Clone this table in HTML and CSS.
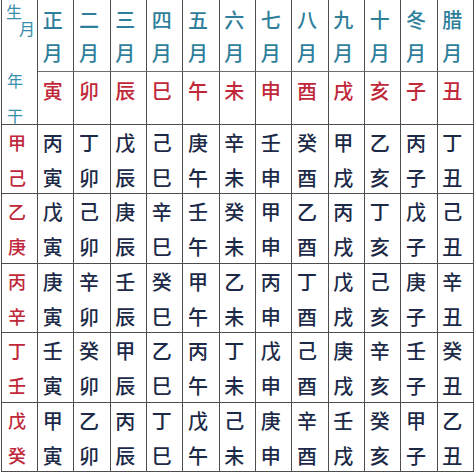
FILE: index.html
```html
<!DOCTYPE html>
<html lang="zh">
<head>
<meta charset="utf-8">
<link rel="stylesheet" href="styles.css">
</head>
<body>
<div class="chart">
  <div class="corner">
    <span class="c-sheng">生</span>
    <span class="c-yue">月</span>
    <span class="c-nian">年</span>
    <span class="c-gan">干</span>
  </div>
  <div class="cell month">正<br>月</div>
  <div class="cell month">二<br>月</div>
  <div class="cell month">三<br>月</div>
  <div class="cell month">四<br>月</div>
  <div class="cell month">五<br>月</div>
  <div class="cell month">六<br>月</div>
  <div class="cell month">七<br>月</div>
  <div class="cell month">八<br>月</div>
  <div class="cell month">九<br>月</div>
  <div class="cell month">十<br>月</div>
  <div class="cell month">冬<br>月</div>
  <div class="cell month">腊<br>月</div>

  <div class="cell branch">寅</div>
  <div class="cell branch">卯</div>
  <div class="cell branch">辰</div>
  <div class="cell branch">巳</div>
  <div class="cell branch">午</div>
  <div class="cell branch">未</div>
  <div class="cell branch">申</div>
  <div class="cell branch">酉</div>
  <div class="cell branch">戌</div>
  <div class="cell branch">亥</div>
  <div class="cell branch">子</div>
  <div class="cell branch">丑</div>

  <div class="cell year">甲<br>己</div>
  <div class="cell gz">丙<br>寅</div><div class="cell gz">丁<br>卯</div><div class="cell gz">戊<br>辰</div><div class="cell gz">己<br>巳</div><div class="cell gz">庚<br>午</div><div class="cell gz">辛<br>未</div><div class="cell gz">壬<br>申</div><div class="cell gz">癸<br>酉</div><div class="cell gz">甲<br>戌</div><div class="cell gz">乙<br>亥</div><div class="cell gz">丙<br>子</div><div class="cell gz">丁<br>丑</div>

  <div class="cell year">乙<br>庚</div>
  <div class="cell gz">戊<br>寅</div><div class="cell gz">己<br>卯</div><div class="cell gz">庚<br>辰</div><div class="cell gz">辛<br>巳</div><div class="cell gz">壬<br>午</div><div class="cell gz">癸<br>未</div><div class="cell gz">甲<br>申</div><div class="cell gz">乙<br>酉</div><div class="cell gz">丙<br>戌</div><div class="cell gz">丁<br>亥</div><div class="cell gz">戊<br>子</div><div class="cell gz">己<br>丑</div>

  <div class="cell year">丙<br>辛</div>
  <div class="cell gz">庚<br>寅</div><div class="cell gz">辛<br>卯</div><div class="cell gz">壬<br>辰</div><div class="cell gz">癸<br>巳</div><div class="cell gz">甲<br>午</div><div class="cell gz">乙<br>未</div><div class="cell gz">丙<br>申</div><div class="cell gz">丁<br>酉</div><div class="cell gz">戊<br>戌</div><div class="cell gz">己<br>亥</div><div class="cell gz">庚<br>子</div><div class="cell gz">辛<br>丑</div>

  <div class="cell year">丁<br>壬</div>
  <div class="cell gz">壬<br>寅</div><div class="cell gz">癸<br>卯</div><div class="cell gz">甲<br>辰</div><div class="cell gz">乙<br>巳</div><div class="cell gz">丙<br>午</div><div class="cell gz">丁<br>未</div><div class="cell gz">戊<br>申</div><div class="cell gz">己<br>酉</div><div class="cell gz">庚<br>戌</div><div class="cell gz">辛<br>亥</div><div class="cell gz">壬<br>子</div><div class="cell gz">癸<br>丑</div>

  <div class="cell year">戊<br>癸</div>
  <div class="cell gz">甲<br>寅</div><div class="cell gz">乙<br>卯</div><div class="cell gz">丙<br>辰</div><div class="cell gz">丁<br>巳</div><div class="cell gz">戊<br>午</div><div class="cell gz">己<br>未</div><div class="cell gz">庚<br>申</div><div class="cell gz">辛<br>酉</div><div class="cell gz">壬<br>戌</div><div class="cell gz">癸<br>亥</div><div class="cell gz">甲<br>子</div><div class="cell gz">乙<br>丑</div>
</div>
</body>
</html>
```

FILE: styles.css
```css
html, body {
  margin: 0;
  padding: 0;
  background: #ffffff;
}

body {
  font-family: "Noto Sans CJK SC", "Noto Sans CJK TC", sans-serif;
}

.chart {
  margin-left: 1px;
  width: 472px;
  border-left: 1px solid #4e4e4e;
  display: grid;
  grid-template-columns: 36px repeat(12, 1fr);
  grid-template-rows: 72px 53px 69px 70px 69px 70px 69px;
}

.cell {
  box-sizing: border-box;
  border-right: 1px solid #4e4e4e;
  border-bottom: 1px solid #4e4e4e;
  text-align: center;
  padding-right: 6px;
  font-size: 20px;
  font-weight: 500;
}

.corner {
  grid-row: span 2;
  box-sizing: border-box;
  border-right: 1px solid #4e4e4e;
  border-bottom: 1px solid #4e4e4e;
  color: #3a8eab;
  font-size: 16px;
  line-height: 17px;
}

.corner span {
  display: block;
}

.c-sheng {
  margin-top: 3px;
  padding-left: 4px;
}

.c-yue {
  padding-left: 17px;
}

.c-nian {
  margin-top: 35px;
  padding-left: 5px;
}

.c-gan {
  margin-top: 18px;
  padding-left: 5px;
}

.month {
  color: #2f7f9c;
  line-height: 33px;
  padding-top: 3px;
  border-bottom-color: #6e6e6e;
}

.branch {
  color: #c0283a;
  line-height: 34px;
  padding-top: 2px;
}

.year {
  color: #c0283a;
  font-size: 18px;
  line-height: 35px;
  text-align: left;
  padding-left: 6px;
  padding-right: 0;
}

.gz {
  color: #1c2a48;
  line-height: 35px;
}
```
